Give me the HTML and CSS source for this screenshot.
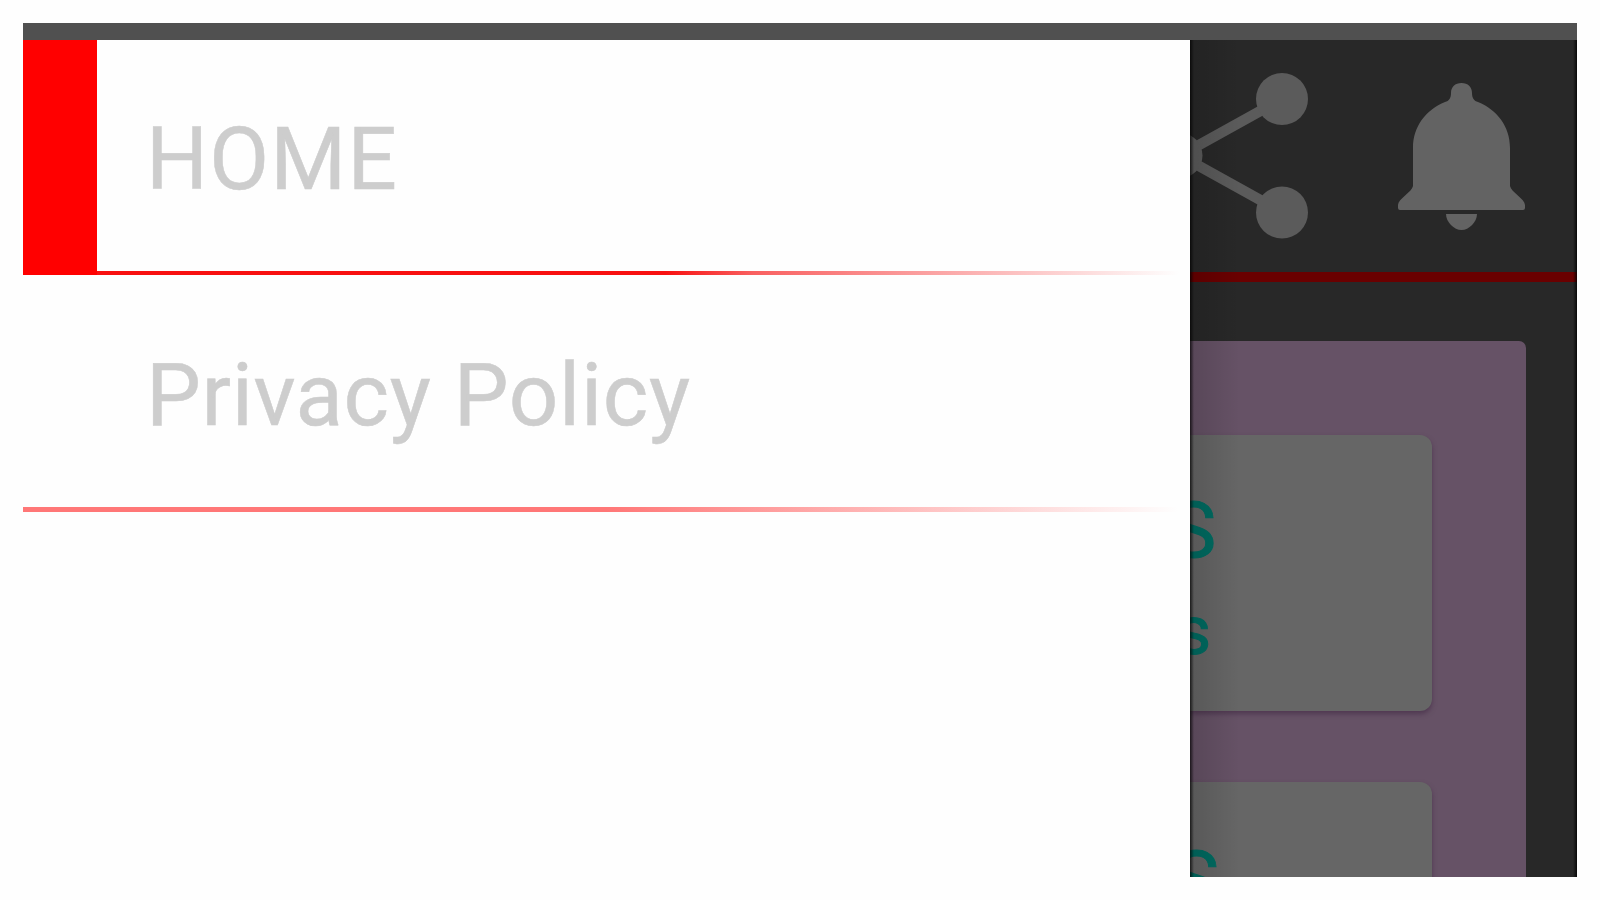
FILE: index.html
```html
<!DOCTYPE html>
<html lang="en">
<head>
<meta charset="utf-8">
<title>Navigation drawer</title>
<link rel="stylesheet" href="styles.css">
</head>
<body>
<div class="screen">
  <div class="status-bar"></div>
  <div class="content">
    <nav class="drawer">
      <a class="item active"><span>HOME</span></a>
      <a class="item"><span>Privacy Policy</span></a>
    </nav>
    <main class="app">
      <header class="toolbar">
        <svg width="387" height="232" viewBox="0 0 387 232">
          <g fill="#5b5b5b" stroke="#5b5b5b">
            <path d="M92 59-10 115.500 92 172" fill="none" stroke-width="10.500"/>
            <circle cx="-10" cy="115.500" r="22.500" stroke="none"/>
            <circle cx="92" cy="59" r="26" stroke="none"/>
            <circle cx="92" cy="172.500" r="26" stroke="none"/>
          </g>
          <path fill="#636363" d="M261 53C261 47 265 43 271.500 43S282 47 282 53C282 58 284 61 288 62C307 70 320 86 320 108V146C321 152 335 159 335 165V168Q335 170 333 170H210Q208 170 208 168V165C208 159 222 152 223 146V108C223 86 236 70 255 62C259 61 261 58 261 53Z"/>
          <path fill="#636363" d="M256 174H287C287 182 279 190 271.500 190S256 182 256 174Z"/>
        </svg>
      </header>
      <section class="panel">
        <div class="card"><b class="title">S</b><b class="sub">s</b></div>
        <div class="card"><b class="title wide">S</b></div>
      </section>
    </main>
  </div>
</div>
</body>
</html>
```
FILE: styles.css
```css
body {
  margin: 0;
  padding: 23px;
  box-sizing: border-box;
  width: 1600px;
  height: 900px;
  overflow: hidden;
  background: #fefefe;
  font-family: Roboto, sans-serif;
}
.screen {
  width: 1554px;
  height: 854px;
  display: flex;
  flex-direction: column;
}
.status-bar {
  height: 17px;
  flex: none;
  background: #505050;
}
.content {
  display: flex;
  height: 837px;
}
.drawer {
  width: 1167px;
  flex: none;
  background: #fefefe;
}
.item {
  box-sizing: border-box;
  display: flex;
  align-items: center;
  height: 235px;
  padding: 2px 0 0 123px;
  color: #cdcdcd;
  font-size: 87px;
  line-height: 100px;
  letter-spacing: .65px;
  white-space: nowrap;
  -webkit-text-stroke: .5px #cdcdcd;
  background: linear-gradient(90deg, #ff7777 50%, #fefefe 99%) 0 100% / 100% 5px no-repeat;
}
.item + .item {
  height: 237px;
}
.item.active {
  border-left: 74px solid #ff0000;
  padding-left: 49px;
  letter-spacing: 1.2px;
  background: linear-gradient(90deg, #f81010 0, #f81010 52%, #f96060 60%, #fefefe 99%) 0 100% / 100% 4px no-repeat;
}
.app {
  position: relative;
  width: 387px;
  overflow: hidden;
  background: #282828;
}
.app::after {
  content: "";
  position: absolute;
  inset: 0;
  background:
    linear-gradient(90deg, rgba(0, 0, 0, .7), transparent) 0 0 / 4px 100% no-repeat,
    linear-gradient(90deg, rgba(0, 0, 0, .14), transparent) 0 0 / 50px 100% no-repeat,
    linear-gradient(270deg, rgba(0, 0, 0, .8), transparent) 100% 0 / 4px 100% no-repeat;
}
.toolbar {
  height: 232px;
  border-bottom: 10px solid #6a0000;
}
.toolbar svg {
  display: block;
}
.panel {
  box-sizing: border-box;
  width: 336px;
  height: 600px;
  margin-top: 59px;
  padding-top: 94px;
  border-top-right-radius: 7px;
  background: #665266;
}
.card {
  box-sizing: border-box;
  width: 242px;
  height: 276px;
  margin-bottom: 71px;
  padding-top: 50px;
  border-radius: 0 12px 12px 0;
  background: #666;
  box-shadow: 0 3px 5px rgba(70, 45, 72, .7);
  color: #006c62;
}
.title, .sub {
  display: block;
  font-weight: 400;
  -webkit-text-stroke: 1px #006c62;
  text-align: right;
}
.title {
  width: 27px;
  margin-left: -1px;
  font-size: 78px;
  line-height: 92px;
  direction: rtl;
}
.title.wide {
  margin: 2px 0 0 2px;
}
.sub {
  width: 21px;
  font-size: 68px;
  line-height: 108px;
  direction: rtl;
}
```
